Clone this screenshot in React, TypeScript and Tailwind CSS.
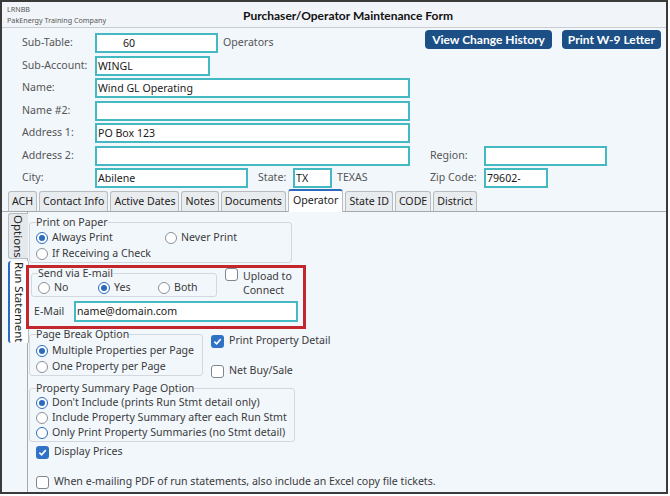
import clsx from 'clsx';
import { ReactNode } from 'react';

const INPUT =
  'h-[20px] border-2 border-[#45b9c2] bg-white pl-[1px] leading-[16px] text-[#1a1a1a]';

const tabs = [
  'ACH',
  'Contact Info',
  'Active Dates',
  'Notes',
  'Documents',
  'Operator',
  'State ID',
  'CODE',
  'District',
];

function Radio({ checked = false, focus = false }: { checked?: boolean; focus?: boolean }) {
  return (
    <span
      className={clsx(
        'flex h-[12px] w-[12px] shrink-0 items-center justify-center rounded-full bg-white',
        checked || focus
          ? 'border-[1.5px] border-[#2a6bbd]'
          : 'border border-[#8c9198]'
      )}
    >
      {checked && <span className="h-[6px] w-[6px] rounded-full bg-[#2a6bbd]" />}
    </span>
  );
}

function Option({
  label,
  checked,
  focus,
  className,
}: {
  label: string;
  checked?: boolean;
  focus?: boolean;
  className?: string;
}) {
  return (
    <div className={clsx('flex items-center gap-[4px]', className)}>
      <Radio checked={checked} focus={focus} />
      <span>{label}</span>
    </div>
  );
}

function Check({ checked = false }: { checked?: boolean }) {
  return checked ? (
    <span className="flex h-[13px] w-[13px] shrink-0 items-center justify-center rounded-[3px] bg-[#2f73c6]">
      <svg width="9" height="9" viewBox="0 0 10 10">
        <path d="M1.5 5.2 4 7.6 8.6 2.4" fill="none" stroke="white" strokeWidth="1.8" />
      </svg>
    </span>
  ) : (
    <span className="h-[13px] w-[13px] shrink-0 rounded-[3px] border border-[#81868c] bg-white" />
  );
}

function Group({
  legend,
  className,
  children,
}: {
  legend: string;
  className?: string;
  children: ReactNode;
}) {
  return (
    <fieldset className={clsx('rounded-[3px] border border-[#d3d8de] pl-[6px]', className)}>
      <legend className="px-0 leading-[14px]">{legend}</legend>
      {children}
    </fieldset>
  );
}

function Row({ label, children }: { label: string; children: ReactNode }) {
  return (
    <div className="flex h-[20px] items-center">
      <span className="w-[73px] text-[#555]">{label}</span>
      {children}
    </div>
  );
}

export default function App() {
  return (
    <div className="h-[496px] w-[670px] bg-white">
      <div className="flex h-[494px] w-[668px] flex-col overflow-hidden whitespace-nowrap border-2 border-[#3a3a3a] bg-[#f2f7fc] font-['Noto_Sans',sans-serif] text-[10.6px] text-[#333]">
        {/* header */}
        <div className="flex h-[26px] shrink-0 items-center border-b border-[#c9cdd2] bg-[#f1f5f9]">
          <div className="w-[241px] pl-[5px] text-[7.2px] leading-[11px] text-[#555]">
            <div>LRNBB</div>
            <div>PakEnergy Training Company</div>
          </div>
          <div className="pt-[3px] font-['Lato',sans-serif] text-[12px] font-bold text-[#111]">
            Purchaser/Operator Maintenance Form
          </div>
        </div>

        {/* top fields */}
        <div className="flex flex-col gap-[2.5px] pl-[20px] pr-[5px] pt-[5px]">
          <Row label="Sub-Table:">
            <div className={clsx(INPUT, 'w-[123px] pl-[26px]')}>60</div>
            <span className="ml-[5px] text-[#555]">Operators</span>
            <div className="ml-auto flex gap-[10px] self-start -mt-[3px] font-['Lato',sans-serif]">
              <div className="flex h-[19px] items-center rounded-[4px] bg-[#1b4f86] px-[7px] text-[12px] font-bold text-white">
                View Change History
              </div>
              <div className="flex h-[19px] items-center rounded-[4px] bg-[#1b4f86] px-[6px] text-[12px] font-bold text-white">
                Print W-9 Letter
              </div>
            </div>
          </Row>
          <Row label="Sub-Account:">
            <div className={clsx(INPUT, 'w-[115px]')}>WINGL</div>
          </Row>
          <Row label="Name:">
            <div className={clsx(INPUT, 'w-[315px]')}>Wind GL Operating</div>
          </Row>
          <Row label="Name #2:">
            <div className={clsx(INPUT, 'w-[315px]')} />
          </Row>
          <Row label="Address 1:">
            <div className={clsx(INPUT, 'w-[315px]')}>PO Box 123</div>
          </Row>
          <Row label="Address 2:">
            <div className={clsx(INPUT, 'w-[315px]')} />
            <span className="ml-[20px] w-[54px] text-[#555]">Region:</span>
            <div className={clsx(INPUT, 'w-[123px]')} />
          </Row>
          <Row label="City:">
            <div className="flex w-[315px] items-center">
              <div className={clsx(INPUT, 'w-[153px]')}>Abilene</div>
              <span className="ml-[10px] w-[35px] text-[#555]">State:</span>
              <div className={clsx(INPUT, 'w-[39px]')}>TX</div>
              <span className="ml-[5px] text-[#555]">TEXAS</span>
            </div>
            <span className="ml-[20px] w-[54px] text-[#555]">Zip Code:</span>
            <div className={clsx(INPUT, 'w-[64px]')}>79602-</div>
          </Row>
        </div>

        {/* tab bar */}
        <div className="mt-[2px] flex h-[22px] shrink-0 items-end gap-[2px] border-b border-[#a5a9ad] pl-[6px]">
          {tabs.map((t) =>
            t === 'Operator' ? (
              <div
                key={t}
                className="-mb-px h-[23px] rounded-t-[3px] border border-b-0 border-t-2 border-[#b8bcc0] border-t-[#2a6bbd] bg-white px-[4px] leading-[19px] text-[#222]"
              >
                {t}
              </div>
            ) : (
              <div
                key={t}
                className="h-[20px] rounded-t-[3px] border border-b-0 border-[#b8bcc0] bg-[#e9ecef] px-[3px] leading-[19px] text-[#222]"
              >
                {t}
              </div>
            )
          )}
        </div>

        {/* body */}
        <div className="flex min-h-0 flex-1">
          <div className="flex w-[26px] shrink-0 flex-col gap-[2px] border-r border-[#a5a9ad] pl-[6px] pt-[1px]">
            <div className="flex h-[46px] w-[20px] items-center justify-center rounded-l-[3px] border border-r-0 border-[#b8bcc0] bg-[#e6e9ec] text-[11.5px] text-[#222] [writing-mode:vertical-rl]">
              Options
            </div>
            <div className="-mr-px flex h-[82px] w-[21px] items-center justify-center rounded-l-[3px] border-l-2 border-y border-[#b8bcc0] border-l-[#2a6bbd] bg-white text-[11.5px] text-[#222] [writing-mode:vertical-rl]">
              Run Statement
            </div>
          </div>

          <div className="ml-[1px] flex flex-col text-[#3a3a3a]">
            <Group legend="Print on Paper" className="mt-[3px] w-[263px]">
              <div className="pt-[1px]">
                <div className="flex h-[16px] items-center">
                  <Option label="Always Print" checked className="w-[129px]" />
                  <Option label="Never Print" />
                </div>
                <div className="flex h-[16px] items-center">
                  <Option label="If Receiving a Check" />
                </div>
              </div>
            </Group>

            {/* highlighted block */}
            <div className="relative z-0 -ml-[3px] mt-[2px] h-[64px] w-[280px] border-[3px] border-[#c2272d]">
              <div className="flex">
                <Group legend="Send via E-mail" className="-mt-[2px] ml-[2px] h-[31px] w-[186px]">
                  <div className="flex h-[16px] items-center">
                    <Option label="No" className="w-[60px]" />
                    <Option label="Yes" checked className="w-[60px]" />
                    <Option label="Both" />
                  </div>
                </Group>
                <div className="ml-[8px] flex gap-[5px]">
                  <Check />
                  <div className="mt-[1px] leading-[14px]">
                    Upload to
                    <br />
                    Connect
                  </div>
                </div>
              </div>
              <div className="mt-[4px] flex h-[21px] items-center">
                <span className="ml-[5px] w-[40px]">E-Mail</span>
                <div className={clsx(INPUT, 'h-[21px] w-[224px]')}>name@domain.com</div>
              </div>
            </div>

            <div className="relative z-10 -mt-[2px] flex items-start">
              <Group legend="Page Break Option" className="w-[174px]">
                <div className="pt-[2px]">
                  <div className="flex h-[16px] items-center">
                    <Option label="Multiple Properties per Page" checked />
                  </div>
                  <div className="flex h-[16px] items-center">
                    <Option label="One Property per Page" />
                  </div>
                </div>
              </Group>
              <div className="ml-[8px] flex h-[48px] flex-col pt-[6px]">
                <div className="flex h-[16px] shrink-0 items-center gap-[5px]">
                  <Check checked />
                  <span>Print Property Detail</span>
                </div>
                <div className="mt-[14px] flex h-[16px] shrink-0 items-center gap-[5px]">
                  <Check />
                  <span>Net Buy/Sale</span>
                </div>
              </div>
            </div>

            <Group legend="Property Summary Page Option" className="mt-[5px] w-[266px] pb-[1px]">
              <div className="flex h-[15px] items-center">
                <Option label="Don't Include (prints Run Stmt detail only)" checked />
              </div>
              <div className="flex h-[15px] items-center">
                <Option label="Include Property Summary after each Run Stmt" />
              </div>
              <div className="flex h-[15px] items-center">
                <Option label="Only Print Property Summaries (no Stmt detail)" focus />
              </div>
            </Group>

            <div className="ml-[7px] mt-[2px] flex h-[16px] items-center gap-[5px]">
              <Check checked />
              <span>Display Prices</span>
            </div>
            <div className="ml-[7px] mt-[14px] flex h-[16px] items-center gap-[5px]">
              <Check />
              <span>When e-mailing PDF of run statements, also include an Excel copy file tickets.</span>
            </div>
          </div>
        </div>
      </div>
    </div>
  );
}
